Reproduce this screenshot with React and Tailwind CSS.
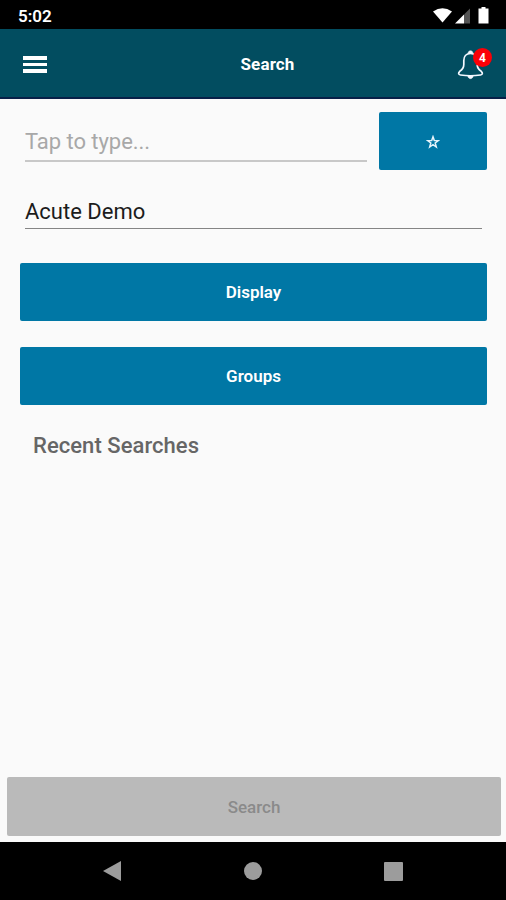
function StatusIcons() {
  return (
    <svg width="58" height="18" viewBox="0 0 58 18" fill="#fff">
      <path d="M1 4.500 Q10.500 -2 20 4.500 L10.500 15.500 Z" />
      <path d="M23 16.500 L32 7.500 V16.500 Z" />
      <path d="M32 7.500 L38 1.500 V16.500 H32 Z" fill="#555" />
      <path d="M47 1.500 h2.500 v-1.500 h4 v1.500 H56.500 v15 H46.500 V1.500 Z" />
    </svg>
  )
}

function Bell() {
  return (
    <svg width="28" height="32" viewBox="0 0 28 32" fill="none" stroke="#f4f8ff" strokeWidth="1.700" strokeLinejoin="round">
      <path d="M13.500 4.500 C9 4.500 6.800 7.500 6.800 11.500 V15.500 C6.800 19 5.500 20.500 2.800 22.300 C1 24 1.300 25.700 3.500 26 C10 27 17 27 23.500 26 C25.700 25.700 26 24 24.200 22.300 C21.500 20.500 20.200 19 20.200 15.500 V11.500 C20.200 7.500 18 4.500 13.500 4.500 Z" />
      <path d="M11 4.500 C11 0.800 16 0.800 16 4.500 Z M10.800 27 C11.300 30.500 15.700 30.500 16.200 27 Z" fill="#f4f8ff" strokeWidth="0.500" />
    </svg>
  )
}

function Star() {
  return (
    <svg width="14" height="14" viewBox="0 0 14 14" fill="none" stroke="#e6f4fb" strokeWidth="1.500">
      <path d="M7 1.800 L8.300 5.500 L12.300 5.600 L9.200 8 L10.300 12 L7 9.700 L3.700 12 L4.800 8 L1.700 5.600 L5.700 5.500 Z" />
    </svg>
  )
}

function Button({ children, label }) {
  return (
    <button type="button" aria-label={label} className="flex h-[58px] w-full items-center justify-center rounded-[2px] bg-[#0077a5] pt-0.5 text-[17px] font-semibold text-white">
      {children}
    </button>
  )
}

export default function App() {
  return (
    <div className="flex h-[900px] w-[506px] flex-col overflow-hidden bg-[#fafafa] font-['Roboto',sans-serif]">
      <div className="flex h-[29px] shrink-0 items-center justify-between bg-black pt-[3px] pr-4 pl-[18px]">
        <span className="pt-px text-[17px] font-semibold text-white">5:02</span>
        <StatusIcons />
      </div>

      <header className="flex h-[70px] shrink-0 items-center justify-between border-b-2 border-[#082048] bg-[#024d60] pt-[3px] pr-[14px] pl-[23px]">
        <button type="button" aria-label="Menu" className="flex w-6 flex-col gap-[3px]">
          <span className="h-1 bg-white" />
          <span className="h-[3px] bg-white" />
          <span className="h-1 bg-white" />
        </button>
        <h1 className="pl-[31px] text-[17px] font-bold tracking-[0.15px] text-white">Search</h1>
        <div className="relative pr-[7px]">
          <Bell />
          <span className="absolute -top-px right-0 flex size-[19px] items-center justify-center rounded-full bg-[#fb0007] pt-px text-[12px] font-bold text-white">4</span>
        </div>
      </header>

      <main className="flex flex-1 flex-col pt-[13px] pr-[19px] pl-5">
        <div className="flex h-[58px] gap-3">
          <div className="ml-[5px] flex flex-1 flex-col">
            <input
              placeholder="Tap to type..."
              className="mt-3 h-[38px] w-[342px] border-b-2 border-[#c8c8c8] pb-px text-[22px] tracking-[-0.05px] outline-none placeholder:text-[#a8a8a8]"
            />
          </div>
          <div className="w-[108px]">
            <Button label="Favorite">
              <Star />
            </Button>
          </div>
        </div>

        <div className="mt-[21px] mr-[5px] ml-[5px] flex h-[38px] items-center border-b border-[#858585] pt-[3px] text-[22px] text-[#1c1c1c]">
          Acute Demo
        </div>

        <div className="mt-[34px] flex flex-col gap-[26px]">
          <Button>Display</Button>
          <Button>Groups</Button>
        </div>

        <h2 className="mt-[25px] ml-[13px] text-[22px] leading-8 font-medium tracking-[0.05px] text-[#666]">Recent Searches</h2>
      </main>

      <div className="pr-[5px] pb-1.5 pl-[7px]">
        <button type="button" disabled className="h-[59px] w-full rounded-[2px] bg-[#bababa] pt-0.5 text-[17px] font-medium text-[#8a8a8a]">
          Search
        </button>
      </div>

      <nav className="flex h-[58px] shrink-0 items-center justify-between bg-black pr-[103px] pl-[102px]">
        <svg width="20" height="22" viewBox="0 0 20 22" fill="#9c9c9c">
          <path d="M1 11 L19 1 V21 Z" />
        </svg>
        <span className="size-[18px] rounded-full bg-[#9c9c9c]" />
        <span className="size-[19px] rounded-[1px] bg-[#9c9c9c]" />
      </nav>
    </div>
  )
}
